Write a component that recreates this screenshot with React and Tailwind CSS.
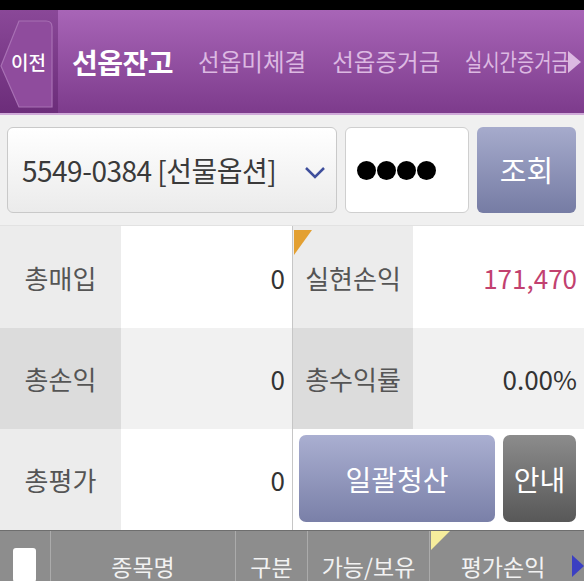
export default function App() {
  const label = "flex items-center justify-center text-[26px] text-[#555]";
  const val = "flex items-center justify-end pr-[7px] text-[26px] text-[#333]";
  return (
    <div className="w-[584px] h-[581px] overflow-hidden bg-[#f0f0f0] font-['Noto_Sans_CJK_KR',sans-serif]">
      <div className="h-[10px] bg-black" />
      <header className="h-[105px] flex bg-gradient-to-b from-[#a865b7] to-[#7d3b8c] border-b-2 border-[#cfaad8]">
        <div className="relative w-[58px] shrink-0 bg-gradient-to-b from-[#8a4898] to-[#6c2d7a]">
          <svg className="absolute left-0 top-0" width="58" height="103">
            <path d="M19 11 H46 Q52 11 52 17 V97 H19 L1 56 Z" fill="#8f4c9d" stroke="#a870b4" strokeWidth="1.2" />
          </svg>
          <span className="absolute left-[11px] top-[40px] text-[19px] leading-[24px] text-white font-medium">이전</span>
        </div>
        <nav className="flex items-center pl-[14px] text-[23.5px] text-[#dcb9e2] whitespace-nowrap">
          <span className="text-[28px] font-bold text-white tracking-[-0.5px]">선옵잔고</span>
          <span className="ml-[25px]">선옵미체결</span>
          <span className="ml-[26px]">선옵증거금</span>
          <span className="ml-[25px] inline-block origin-left scale-x-[0.8] mr-[-28px]">실시간증거금</span>
          <svg width="14" height="22" className="ml-[1px]"><path d="M0 0 L13 11 L0 22 Z" fill="#dcb9e2" /></svg>
        </nav>
      </header>

      <section className="h-[110px] flex items-center gap-[8px] px-[7px]">
        <div className="relative w-[330px] h-[86px] rounded-[6px] border border-[#c9c9c9] bg-gradient-to-b from-white to-[#ebebeb] flex items-center pl-[14px]">
          <span className="text-[28px] text-[#3a3a3a] tracking-[-0.5px]">5549-0384 [선물옵션]</span>
          <svg className="absolute left-[296px] top-[38px]" width="22" height="14">
            <path d="M2 2 L11 11 L20 2" fill="none" stroke="#3f4f9c" strokeWidth="2.5" />
          </svg>
        </div>
        <div className="w-[124px] h-[86px] rounded-[6px] border border-[#cfcfcf] bg-white flex items-center pl-[11px] gap-[1px]">
          <span className="w-[19px] h-[19px] rounded-full bg-black" />
          <span className="w-[19px] h-[19px] rounded-full bg-black" />
          <span className="w-[19px] h-[19px] rounded-full bg-black" />
          <span className="w-[19px] h-[19px] rounded-full bg-black" />
        </div>
        <div className="w-[99px] h-[86px] rounded-[6px] bg-gradient-to-b from-[#a6abcc] to-[#767ca4] flex items-center justify-center text-[29px] text-white">
          조회
        </div>
      </section>

      <div className="grid grid-cols-[121px_171px_121px_171px] grid-rows-[102px_101px_101px] border-t border-[#e2e2e2]">
        <div className={`${label} bg-[#ececec]`}>총매입</div>
        <div className={`${val} bg-white`}>0</div>
        <div className={`${label} relative bg-[#ececec] border-l border-[#c6c6c6]`}>
          <svg className="absolute left-0 top-[4px]" width="20" height="26"><path d="M1 0 H19 L1 25 Z" fill="#e3a032" /></svg>
          실현손익
        </div>
        <div className={`${val} bg-white text-[#c2416f]`}>171,470</div>

        <div className={`${label} bg-[#dcdcdc]`}>총손익</div>
        <div className={`${val} bg-[#f1f1f1]`}>0</div>
        <div className={`${label} bg-[#dcdcdc] border-l border-[#c6c6c6]`}>총수익률</div>
        <div className={`${val} bg-[#f1f1f1]`}>0.00%</div>

        <div className={`${label} bg-[#ececec]`}>총평가</div>
        <div className={`${val} bg-white`}>0</div>
        <div className="col-span-2 bg-white border-l border-[#c6c6c6] flex gap-[8px] pl-[6px] pr-[8px] pt-[6px] pb-[8px]">
          <div className="w-[196px] rounded-[7px] bg-gradient-to-b from-[#aaafd1] to-[#7a80a8] flex items-center justify-center text-[28px] text-white">
            일괄청산
          </div>
          <div className="w-[73px] rounded-[7px] bg-gradient-to-b from-[#8c8c8c] to-[#585858] flex items-center justify-center text-[28px] text-white">
            안내
          </div>
        </div>
      </div>

      <div className="h-[72px] flex bg-[#8d8d8d] border-t border-[#6e6e6e] text-[23px] text-[#f2f2f2]">
        <div className="w-[51px] shrink-0 border-r border-[#ababab] pl-[13px] pt-[17px]">
          <div className="w-[23px] h-[34px] rounded-[3px] bg-white" />
        </div>
        <div className="w-[185px] shrink-0 border-r border-[#ababab] flex items-center justify-center">종목명</div>
        <div className="w-[72px] shrink-0 border-r border-[#ababab] flex items-center justify-center">구분</div>
        <div className="w-[122px] shrink-0 border-r border-[#ababab] flex items-center justify-center">가능/보유</div>
        <div className="relative flex-1 flex items-center justify-center pr-[8px]">
          <svg className="absolute left-[1px] top-0" width="20" height="20"><path d="M0 0 H19 L0 19 Z" fill="#f6ed9c" /></svg>
          평가손익
          <svg className="absolute right-0 top-[24px]" width="12" height="22"><path d="M0 0 L12 11 L0 22 Z" fill="#3b3fc2" /></svg>
        </div>
      </div>
    </div>
  );
}
